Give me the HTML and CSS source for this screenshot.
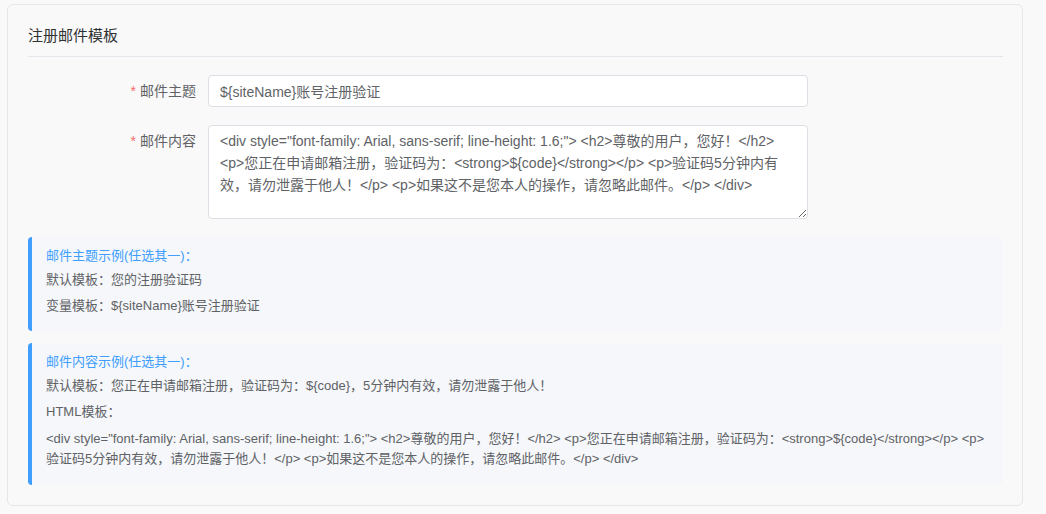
FILE: index.html
```html
<!DOCTYPE html>
<html lang="zh-CN">
<head>
    <meta charset="UTF-8">
    <meta name="viewport" content="width=device-width, initial-scale=1.0">
    <title>注册邮件模板</title>
    <link rel="stylesheet" href="styles.css">
</head>
<body>
    <div class="card">
        <div class="card-header">注册邮件模板</div>

        <div class="form">
            <div class="form-item">
                <label class="form-label"><span class="required">*</span>邮件主题</label>
                <div class="form-control">
                    <input type="text" class="input" value="${siteName}账号注册验证">
                </div>
            </div>

            <div class="form-item">
                <label class="form-label"><span class="required">*</span>邮件内容</label>
                <div class="form-control">
                    <textarea class="textarea"><div style="font-family: Arial, sans-serif; line-height: 1.6;"> <h2>尊敬的用户，您好！</h2> <p>您正在申请邮箱注册，验证码为：<strong>${code}</strong></p> <p>验证码5分钟内有效，请勿泄露于他人！</p> <p>如果这不是您本人的操作，请忽略此邮件。</p> </div></textarea>
                </div>
            </div>
        </div>

        <div class="tip">
            <p class="tip-title">邮件主题示例(任选其一)：</p>
            <p class="tip-line first">默认模板：您的注册验证码</p>
            <p class="tip-line">变量模板：${siteName}账号注册验证</p>
        </div>

        <div class="tip">
            <p class="tip-title">邮件内容示例(任选其一)：</p>
            <p class="tip-line first">默认模板：您正在申请邮箱注册，验证码为：${code}，5分钟内有效，请勿泄露于他人！</p>
            <p class="tip-line">HTML模板：</p>
            <p class="tip-code">&lt;div style="font-family: Arial, sans-serif; line-height: 1.6;"&gt; &lt;h2&gt;尊敬的用户，您好！&lt;/h2&gt; &lt;p&gt;您正在申请邮箱注册，验证码为：&lt;strong&gt;${code}&lt;/strong&gt;&lt;/p&gt; &lt;p&gt;验证码5分钟内有效，请勿泄露于他人！&lt;/p&gt; &lt;p&gt;如果这不是您本人的操作，请忽略此邮件。&lt;/p&gt; &lt;/div&gt;</p>
        </div>
    </div>
</body>
</html>
```

FILE: styles.css
```css
* {
    box-sizing: border-box;
}

body {
    margin: 0;
    padding: 4px 23px 8px 7px;
    background-color: #f9f9f9;
    font-family: "Liberation Sans", Arial, "Noto Sans CJK SC", sans-serif;
    color: #606266;
}

.card {
    background-color: #f9f9f9;
    border: 1px solid #e6e6e6;
    border-radius: 6px;
    padding: 0 19px 20px 20px;
}

.card-header {
    font-size: 15px;
    line-height: 20px;
    color: #303133;
    padding: 21px 0 10px;
    border-bottom: 1px solid #e4e6eb;
}

.form {
    padding-top: 18px;
    width: 780px;
}

.form-item {
    display: flex;
    margin-bottom: 18px;
}

.form-label {
    width: 180px;
    flex-shrink: 0;
    text-align: right;
    padding-right: 12px;
    font-size: 14px;
    line-height: 32px;
    color: #606266;
}

.required {
    color: #f56c6c;
    margin-right: 4px;
}

.form-control {
    flex-grow: 1;
}

.input,
.textarea {
    display: block;
    width: 100%;
    border: 1px solid #dcdfe6;
    border-radius: 4px;
    background-color: #fff;
    color: #606266;
    font-family: "Liberation Sans", Arial, "Noto Sans CJK SC", sans-serif;
    font-size: 14px;
    outline: none;
}

.input {
    height: 32px;
    padding: 0 11px;
}

.textarea {
    height: 94px;
    padding: 4px 11px;
    line-height: 22px;
    resize: vertical;
}

.tip {
    background-color: #f5f7fa;
    border-left: 4px solid #409eff;
    border-radius: 4px;
    padding: 9px 15px 15px 14px;
    margin-bottom: 12px;
    font-size: 13px;
}

.tip:last-child {
    margin-bottom: 0;
    padding-bottom: 16px;
}

.tip p {
    margin: 0;
    line-height: 20px;
}

.tip-title {
    color: #409eff;
}

.tip-line {
    margin-top: 6px !important;
}

.tip-line.first {
    margin-top: 4px !important;
}

.tip-code {
    margin-top: 7px !important;
    line-height: 20px !important;
}
```
